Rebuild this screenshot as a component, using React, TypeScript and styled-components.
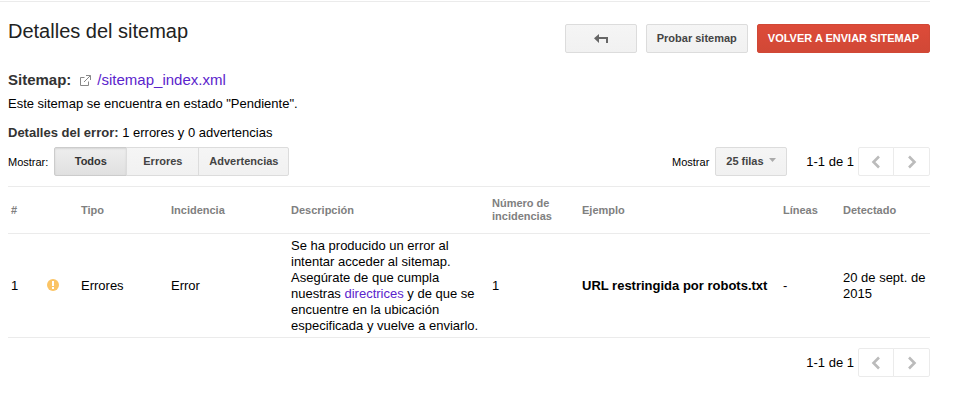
import React, { useState } from "react";
import styled, { createGlobalStyle, css } from "styled-components";

const GlobalStyle = createGlobalStyle`
  *, *::before, *::after { box-sizing: border-box; }
  body {
    margin: 0;
    background: #fff;
    color: #000;
    font: 13px/16px "Liberation Sans", Arial, Helvetica, sans-serif;
  }
  button, select { font-family: inherit; margin: 0; cursor: pointer; }
`;

const Page = styled.div`
  padding-right: 35px;
  padding-top: 1px;
`;

const Header = styled.header`
  display: flex;
  align-items: flex-start;
  justify-content: space-between;
  border-top: 1px solid #ebebeb;
  padding: 17px 0 17px 8px;
`;

const Title = styled.h1`
  margin: 0;
  font-size: 20px;
  line-height: 24px;
  font-weight: 400;
  color: #222;
`;

const Actions = styled.div`
  display: flex;
  padding-top: 5px;
  gap: 9px;
`;

const raised = css`
  height: 29px;
  border: 1px solid #dcdcdc;
  border-radius: 2px;
  background: linear-gradient(#f5f5f5, #f1f1f1);
  color: #444;
  font-size: 11px;
  line-height: 27px;
  font-weight: 700;
`;

const Button = styled.button`
  ${raised}
  display: flex;
  align-items: center;
  justify-content: center;
  min-width: 72px;
  padding: 0 10px;
  white-space: nowrap;
`;

const PrimaryButton = styled(Button)`
  border-color: #d14836;
  background: linear-gradient(#dd4b39, #d14836);
  color: #fff;
  text-transform: uppercase;
`;

const Main = styled.main`
  padding-left: 8px;
`;

const SitemapLine = styled.h2`
  display: flex;
  align-items: center;
  margin: 0;
  font-size: 15px;
  line-height: 20px;
  color: #333;

  svg { margin: 0 6px 0 9px; }
`;

const Link = styled.a`
  color: #5b24cc;
  font-weight: 400;
  text-decoration: none;
`;

const Paragraph = styled.p`
  margin: 6px 0 0;
`;

const Summary = styled.p`
  margin: 13px 0 6px;

  strong { color: #333; }
`;

const Toolbar = styled.div`
  display: flex;
  align-items: center;
  justify-content: space-between;
  padding-bottom: 10px;
`;

const Group = styled.div`
  display: flex;
  align-items: center;
`;

const SmallLabel = styled.label`
  font-size: 11px;
  margin-right: 6px;
`;

const Segment = styled.button<{ $active: boolean }>`
  ${raised}
  min-width: 73px;
  padding: 0 10px;
  border-radius: 0;

  & + & { margin-left: -1px; }
  &:first-child { border-radius: 2px 0 0 2px; }
  &:last-child { border-radius: 0 2px 2px 0; }

  ${({ $active }) =>
    $active &&
    css`
      border-color: #ccc;
      background: linear-gradient(#eee, #e0e0e0);
      box-shadow: inset 0 1px 2px rgba(0, 0, 0, 0.1);
      color: #333;
    `}
`;

const SelectBox = styled.div`
  display: grid;
  align-items: center;
  margin-right: 19px;

  > * { grid-area: 1 / 1; }
  svg { justify-self: end; margin-right: 11px; margin-bottom: 3px; pointer-events: none; }
`;

const Select = styled.select`
  ${raised}
  appearance: none;
  width: 72px;
  padding: 0 10px;
`;

const PagerRow = styled.div`
  display: flex;
  align-items: center;
`;

const PagerText = styled.span`
  margin-right: 4px;
`;

const PagerButton = styled.button`
  display: flex;
  align-items: center;
  justify-content: center;
  width: 36px;
  height: 29px;
  padding: 0;
  border: 1px solid #ebebeb;
  border-radius: 2px 0 0 2px;
  background: #fff;

  & + & { width: 37px; margin-left: -1px; border-radius: 0 2px 2px 0; }
`;

const Table = styled.table`
  width: 100%;
  table-layout: fixed;
  border-collapse: collapse;
  border-bottom: 1px solid #ebebeb;
`;

const Col = styled.col<{ $width?: number }>`
  width: ${({ $width }) => ($width ? `${$width}px` : "auto")};
`;

const HeadCell = styled.th`
  height: 47px;
  padding: 0 3px;
  border-top: 1px solid #ebebeb;
  color: #808080;
  font-size: 11px;
  line-height: 13px;
  font-weight: 700;
  text-align: left;
`;

const Cell = styled.td`
  height: 104px;
  padding: 3px;
  border-top: 1px solid #ebebeb;
  vertical-align: middle;

  > svg { display: block; margin-bottom: 2px; }
`;

const Footer = styled.footer`
  display: flex;
  justify-content: flex-end;
  padding: 10px 0;
`;

const BackIcon = () => (
  <svg width="14" height="10" viewBox="0 0 14 10" aria-hidden="true">
    <path d="M5 0v3h9v6h-2V5H5v4L0 4.200z" fill="#666" />
  </svg>
);

const ExternalIcon = () => (
  <svg width="11" height="11" viewBox="0 0 11 11" fill="none" stroke="#888" aria-hidden="true">
    <path d="M4.500 2.500H.5v8h8V6.500M6 .5h4.500V5M10.300.7L4 7" />
  </svg>
);

const WarningIcon = () => (
  <svg width="12" height="12" viewBox="0 0 12 12" role="img" aria-label="Error">
    <circle cx="6" cy="6" r="6" fill="#fbc465" />
    <path d="M5 2h2v5H5zM5 8h2v2H5z" fill="#fff" />
  </svg>
);

const CaretIcon = () => (
  <svg width="7" height="4" viewBox="0 0 7 4" aria-hidden="true">
    <path d="M0 0h7L3.500 4z" fill="#aaa" />
  </svg>
);

const Chevron = ({ next }: { next?: boolean }) => (
  <svg width="10" height="14" viewBox="0 0 10 14" fill="none" stroke="#bbb" strokeWidth="2.600" aria-hidden="true">
    <path d={next ? "M2 1.500L7.500 7 2 12.500" : "M8 1.500L2.500 7 8 12.500"} />
  </svg>
);

const Pager = () => (
  <PagerRow>
    <PagerText>1-1 de 1</PagerText>
    <PagerButton type="button" aria-label="Anterior"><Chevron /></PagerButton>
    <PagerButton type="button" aria-label="Siguiente"><Chevron next /></PagerButton>
  </PagerRow>
);

const filters = ["Todos", "Errores", "Advertencias"];

const columns: { label: string; width?: number }[] = [
  { label: "#", width: 36 },
  { label: "", width: 34 },
  { label: "Tipo", width: 90 },
  { label: "Incidencia", width: 120 },
  { label: "Descripción" },
  { label: "Número de incidencias", width: 90 },
  { label: "Ejemplo" },
  { label: "Líneas", width: 60 },
  { label: "Detectado", width: 90 },
];

export default function App() {
  const [filter, setFilter] = useState("Todos");

  return (
    <Page>
      <GlobalStyle />
      <Header>
        <Title>Detalles del sitemap</Title>
        <Actions>
          <Button type="button" aria-label="Volver"><BackIcon /></Button>
          <Button type="button">Probar sitemap</Button>
          <PrimaryButton type="button">Volver a enviar sitemap</PrimaryButton>
        </Actions>
      </Header>
      <Main>
        <SitemapLine>
          Sitemap:
          <ExternalIcon />
          <Link href="#sitemap">/sitemap_index.xml</Link>
        </SitemapLine>
        <Paragraph>Este sitemap se encuentra en estado "Pendiente".</Paragraph>
        <Summary><strong>Detalles del error:</strong> 1 errores y 0 advertencias</Summary>
        <Toolbar>
          <Group>
            <SmallLabel as="span" id="filter-label">Mostrar:</SmallLabel>
            <Group role="group" aria-labelledby="filter-label">
              {filters.map((name) => (
                <Segment
                  key={name}
                  type="button"
                  $active={name === filter}
                  aria-pressed={name === filter}
                  onClick={() => setFilter(name)}
                >
                  {name}
                </Segment>
              ))}
            </Group>
          </Group>
          <Group>
            <SmallLabel htmlFor="rows">Mostrar</SmallLabel>
            <SelectBox>
              <Select id="rows" defaultValue="25">
                <option value="25">25 filas</option>
                <option value="50">50 filas</option>
                <option value="100">100 filas</option>
              </Select>
              <CaretIcon />
            </SelectBox>
            <Pager />
          </Group>
        </Toolbar>
        <Table>
          <colgroup>
            {columns.map((c) => <Col key={c.label} $width={c.width} />)}
          </colgroup>
          <thead>
            <tr>
              {columns.map((c) => <HeadCell key={c.label} scope="col">{c.label}</HeadCell>)}
            </tr>
          </thead>
          <tbody>
            <tr>
              <Cell>1</Cell>
              <Cell><WarningIcon /></Cell>
              <Cell>Errores</Cell>
              <Cell>Error</Cell>
              <Cell>
                Se ha producido un error al intentar acceder al sitemap. Asegúrate de que cumpla
                nuestras <Link href="#directrices">directrices</Link> y de que se encuentre en la
                ubicación especificada y vuelve a enviarlo.
              </Cell>
              <Cell>1</Cell>
              <Cell><strong>URL restringida por robots.txt</strong></Cell>
              <Cell>-</Cell>
              <Cell>20 de sept. de 2015</Cell>
            </tr>
          </tbody>
        </Table>
        <Footer><Pager /></Footer>
      </Main>
    </Page>
  );
}
